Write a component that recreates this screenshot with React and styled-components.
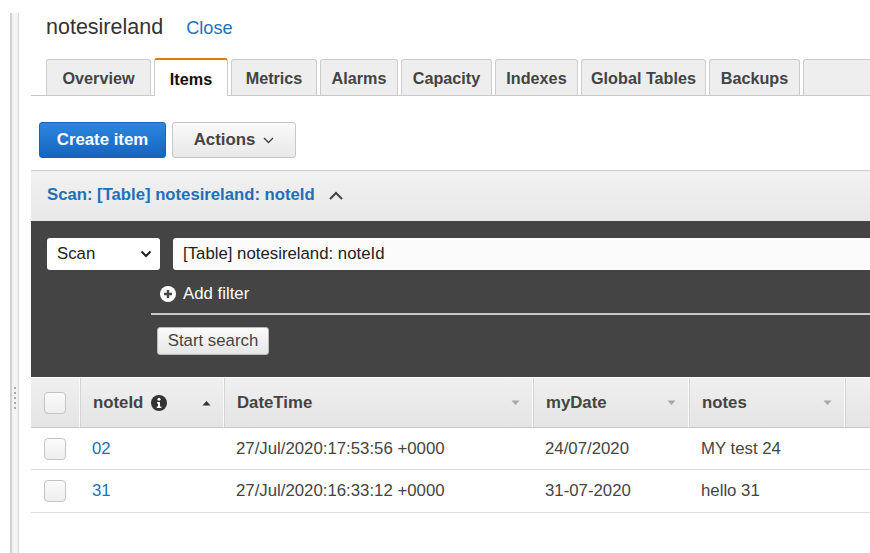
import React from 'react';
import styled, { createGlobalStyle } from 'styled-components';

const GlobalStyle = createGlobalStyle`
  html, body {
    margin: 0;
    padding: 0;
    background: #fff;
    overflow: hidden;
  }
  body {
    font-family: "Liberation Sans", Arial, sans-serif;
    color: #444;
  }
  * { box-sizing: border-box; }
`;

const Page = styled.div`
  display: flex;
  width: 870px;
  height: 553px;
  overflow: hidden;
`;

const Gutter = styled.div`
  flex: 0 0 9px;
  margin: 13px 12px 0 10px;
  background: #f3f3f3;
  border-left: 2px solid #d0d0d0;
  border-right: 1px solid #d6d6d6;
  display: flex;
  flex-direction: column;
  align-items: center;
  justify-content: center;
  padding-top: 230px;
  gap: 3px;
`;

const GripDot = styled.span`
  width: 2px;
  height: 2px;
  background: #aaa;
`;

const Content = styled.div`
  flex: 1;
  min-width: 0;
  overflow: hidden;
`;

const TitleRow = styled.div`
  display: flex;
  align-items: baseline;
  gap: 23px;
  padding: 15px 0 0 15px;
  height: 59px;
`;

const Title = styled.h1`
  margin: 0;
  font-size: 21.5px;
  font-weight: normal;
  color: #333;
`;

const CloseLink = styled.a`
  font-size: 18.2px;
  color: #1f71bd;
  text-decoration: none;
`;

const TabBar = styled.div`
  display: flex;
  gap: 3px;
  padding-left: 15px;
  height: 37px;
  border-bottom: 1px solid #c8c8c8;
  width: 1000px;
`;

const Tab = styled.div`
  flex: 0 0 ${p => p.$w}px;
  padding-top: ${p => (p.$active ? '2px' : '1px')};
  display: flex;
  align-items: center;
  justify-content: center;
  font-size: 16.2px;
  font-weight: bold;
  color: ${p => (p.$active ? '#111' : '#444')};
  background: ${p => (p.$active ? '#fff' : '#eee')};
  border: 1px solid #ccc;
  border-top: ${p => (p.$active ? '2px solid #e07a10' : '1px solid #ccc')};
  border-bottom: none;
  border-radius: 3px 3px 0 0;
  margin-bottom: ${p => (p.$active ? '-1px' : '0')};
  height: ${p => (p.$active ? '38px' : '36px')};
  align-self: flex-end;
  white-space: nowrap;
`;

const ButtonRow = styled.div`
  display: flex;
  gap: 6px;
  padding: 26px 0 0 8px;
  height: 74px;
`;

const PrimaryButton = styled.button`
  height: 36px;
  width: 127px;
  font-family: inherit;
  font-size: 16.8px;
  font-weight: bold;
  color: #fff;
  background: linear-gradient(#2d87dd, #1664c1);
  border: 1px solid #1a62b4;
  border-radius: 3px;
`;

const SecondaryButton = styled.button`
  height: 36px;
  width: 124px;
  font-family: inherit;
  font-size: 16.8px;
  font-weight: bold;
  color: #444;
  background: linear-gradient(#f9f9f9, #e8e8e8);
  border: 1px solid #c6c6c6;
  border-radius: 3px;
  display: flex;
  align-items: center;
  justify-content: center;
  gap: 8px;
`;

const ScanHeader = styled.div`
  height: 51px;
  display: flex;
  align-items: center;
  gap: 13px;
  padding: 0 0 3px 16px;
  background: linear-gradient(#f1f1f1, #e8e8e8);
  border-top: 1px solid #d0d0d0;
`;

const ScanTitle = styled.span`
  font-size: 16.7px;
  font-weight: bold;
  color: #1f6fb7;
`;

const DarkPanel = styled.div`
  background: #444;
  height: 156px;
  padding: 17px 0 0 16px;
`;

const QueryRow = styled.div`
  display: flex;
  gap: 13px;
`;

const SelectBox = styled.div`
  width: 113px;
  height: 32px;
  background: #fff;
  border-radius: 3px;
  display: flex;
  align-items: center;
  justify-content: space-between;
  padding: 0 8px 0 10px;
  font-size: 16.8px;
  color: #222;
`;

const TextInput = styled.div`
  flex: 1;
  height: 32px;
  background: #fbfbfb;
  border-radius: 3px 0 0 3px;
  display: flex;
  align-items: center;
  padding-left: 10px;
  font-size: 16.8px;
  color: #222;
`;

const FilterBlock = styled.div`
  margin-left: 104px;
`;

const AddFilter = styled.div`
  height: 45px;
  display: flex;
  align-items: center;
  gap: 7px;
  padding: 4px 0 0 9px;
  font-size: 16.8px;
  color: #fff;
  border-bottom: 2px solid #c8c8c8;
`;

const SearchButton = styled.button`
  margin: 12px 0 0 6px;
  height: 28px;
  width: 112px;
  font-family: inherit;
  font-size: 16.8px;
  color: #444;
  background: linear-gradient(#fbfbfb, #e6e6e6);
  border: 1px solid #bbb;
  border-radius: 3px;
  padding: 0;
`;

const Table = styled.div`
  display: grid;
  grid-template-columns: 48px 144px 309px 156px 156px 200px;
  width: 1013px;
  margin-top: 1px;
`;

const HeadCell = styled.div`
  height: 50px;
  display: flex;
  align-items: center;
  justify-content: ${p => (p.$center ? 'center' : 'space-between')};
  padding: ${p => (p.$center ? '0' : '0 12px 0 13px')};
  background: linear-gradient(#f0f0f0, #e4e4e4);
  border-bottom: 1px solid #c9c9c9;
  border-left: ${p => (p.$first ? 'none' : '1px solid #fafafa')};
  box-shadow: inset ${p => (p.$first ? '0' : '1px')} 0 0 #d4d4d4;
  font-size: 16.8px;
  font-weight: bold;
  color: #444;
`;

const HeadLabel = styled.span`
  display: flex;
  align-items: center;
  gap: 8px;
`;

const Cell = styled.div`
  height: ${p => p.$h}px;
  display: flex;
  align-items: center;
  justify-content: ${p => (p.$center ? 'center' : 'flex-start')};
  padding-left: ${p => (p.$center ? '0' : '13px')};
  border-bottom: 1px solid #dcdcdc;
  font-size: 16.8px;
  color: ${p => (p.$link ? '#1f6fb7' : '#444')};
`;

const Checkbox = styled.span`
  width: 22px;
  height: 22px;
  border: 1px solid #c4c4c4;
  border-radius: 4px;
  background: linear-gradient(#fbfbfb, #eeeeee);
`;

const Chevron = ({ up }) => (
  <svg width="16" height="10" viewBox="0 0 16 10">
    <path
      d={up ? 'M2 9 L8 3 L14 9' : 'M2 2 L8 8 L14 2'}
      fill="none"
      stroke="#444"
      strokeWidth="2"
    />
  </svg>
);

const SmallChevron = () => (
  <svg width="11" height="7" viewBox="0 0 11 7">
    <path d="M1 1 L5.5 5.5 L10 1" fill="none" stroke="#444" strokeWidth="1.4" />
  </svg>
);

const SelectChevron = () => (
  <svg width="12" height="8" viewBox="0 0 12 8">
    <path d="M1.5 1.5 L6 6 L10.5 1.5" fill="none" stroke="#222" strokeWidth="2" />
  </svg>
);

const PlusCircle = () => (
  <svg width="16" height="16" viewBox="0 0 16 16">
    <circle cx="8" cy="8" r="8" fill="#fff" />
    <path d="M8 4 V12 M4 8 H12" stroke="#444" strokeWidth="2.4" />
  </svg>
);

const InfoIcon = () => (
  <svg width="16" height="16" viewBox="0 0 16 16">
    <circle cx="8" cy="8" r="8" fill="#333" />
    <circle cx="8" cy="4.3" r="1.5" fill="#fff" />
    <path d="M6 7 H9 V11.5 H10.3 V13 H5.8 V11.5 H7 V8.4 H6 Z" fill="#fff" />
  </svg>
);

const SortArrow = ({ up }) => (
  <svg width="9" height="6" viewBox="0 0 9 6">
    <path d={up ? 'M0.5 5.5 L4.5 1 L8.5 5.5 Z' : 'M0.5 0.5 L4.5 5 L8.5 0.5 Z'} fill={up ? '#333' : '#a8a8a8'} />
  </svg>
);

const columns = [
  { key: 'noteId', label: 'noteId', info: true, sortUp: true, link: true },
  { key: 'dateTime', label: 'DateTime' },
  { key: 'myDate', label: 'myDate' },
  { key: 'notes', label: 'notes' },
];

const rows = [
  { noteId: '02', dateTime: '27/Jul/2020:17:53:56 +0000', myDate: '24/07/2020', notes: 'MY test 24', h: 42 },
  { noteId: '31', dateTime: '27/Jul/2020:16:33:12 +0000', myDate: '31-07-2020', notes: 'hello 31', h: 43 },
];

const tabs = [
  { label: 'Overview', w: 105 },
  { label: 'Items', w: 74, active: true },
  { label: 'Metrics', w: 86 },
  { label: 'Alarms', w: 78 },
  { label: 'Capacity', w: 91 },
  { label: 'Indexes', w: 83 },
  { label: 'Global Tables', w: 125 },
  { label: 'Backups', w: 91 },
  { label: '', w: 80 },
];

export default function App() {
  return (
    <>
      <GlobalStyle />
      <Page>
        <Gutter>
          <GripDot />
          <GripDot />
          <GripDot />
          <GripDot />
          <GripDot />
        </Gutter>
        <Content>
          <TitleRow>
            <Title>notesireland</Title>
            <CloseLink>Close</CloseLink>
          </TitleRow>

          <TabBar>
            {tabs.map((t, i) => (
              <Tab key={i} $w={t.w} $active={t.active}>{t.label}</Tab>
            ))}
          </TabBar>

          <ButtonRow>
            <PrimaryButton>Create item</PrimaryButton>
            <SecondaryButton>
              Actions <SmallChevron />
            </SecondaryButton>
          </ButtonRow>

          <ScanHeader>
            <ScanTitle>Scan: [Table] notesireland: noteId</ScanTitle>
            <Chevron up />
          </ScanHeader>

          <DarkPanel>
            <QueryRow>
              <SelectBox>
                Scan <SelectChevron />
              </SelectBox>
              <TextInput>[Table] notesireland: noteId</TextInput>
            </QueryRow>
            <FilterBlock>
              <AddFilter>
                <PlusCircle /> Add filter
              </AddFilter>
              <SearchButton>Start search</SearchButton>
            </FilterBlock>
          </DarkPanel>

          <Table>
            <HeadCell $center $first>
              <Checkbox />
            </HeadCell>
            {columns.map(c => (
              <HeadCell key={c.key}>
                <HeadLabel>
                  {c.label}
                  {c.info && <InfoIcon />}
                </HeadLabel>
                <SortArrow up={c.sortUp} />
              </HeadCell>
            ))}
            <HeadCell />

            {rows.map(r => (
              <React.Fragment key={r.noteId}>
                <Cell $h={r.h} $center>
                  <Checkbox />
                </Cell>
                {columns.map(c => (
                  <Cell key={c.key} $h={r.h} $link={c.link}>
                    {r[c.key]}
                  </Cell>
                ))}
                <Cell $h={r.h} />
              </React.Fragment>
            ))}
          </Table>
        </Content>
      </Page>
    </>
  );
}
